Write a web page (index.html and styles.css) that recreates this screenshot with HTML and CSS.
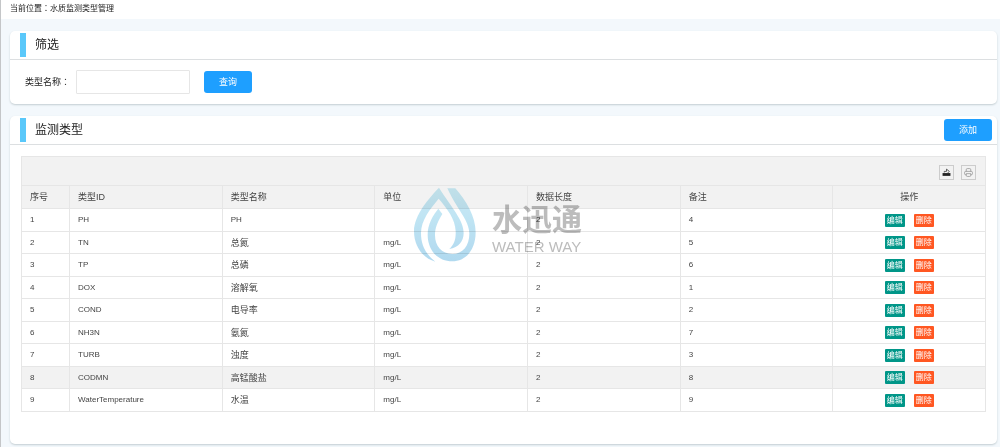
FILE: index.html
```html
<!DOCTYPE html>
<html lang="zh-CN">
<head>
<meta charset="utf-8">
<title>水质监测类型管理</title>
<link rel="stylesheet" href="styles.css">
</head>
<body>
<nav class="crumb">当前位置<span class="colon" lang="zh-TW">：</span>水质监测类型管理</nav>
<main class="page">
  <section class="card">
    <header class="card-head"><h2 class="card-title">筛选</h2></header>
    <form class="filter">
      <label for="typeName">类型名称<span class="colon" lang="zh-TW">：</span></label>
      <input class="field" id="typeName" type="text">
      <button class="btn" type="button">查询</button>
    </form>
  </section>
  <section class="card card-list">
    <header class="card-head"><h2 class="card-title">监测类型</h2><button class="btn" type="button">添加</button></header>
    <div class="list">
      <div class="toolbar">
        <button class="tool" type="button" aria-label="导出"><svg viewBox="0 0 16 16"><path d="M1 9h14v5H1z" fill="#222"/><path d="M4 8V6h4V2l5 4-3 3" fill="none" stroke="#444" stroke-width="1.5"/></svg></button>
        <button class="tool" type="button" aria-label="打印"><svg viewBox="0 0 16 16" fill="none" stroke="#888" stroke-width="1.2"><path d="M4 6V3q0-2 2-2h4q2 0 2 2v3M4 12H3q-2 0-2-2V8q0-2 2-2h10q2 0 2 2v2q0 2-2 2h-1M4 10h8v3q0 2-2 2H6q-2 0-2-2z"/></svg></button>
      </div>
      <table class="grid">
        <colgroup><col class="col-no"><col><col><col><col><col><col></colgroup>
        <thead><tr><th>序号</th><th>类型ID</th><th>类型名称</th><th>单位</th><th>数据长度</th><th>备注</th><th class="ops">操作</th></tr></thead>
        <tbody>
          <tr><td>1</td><td>PH</td><td>PH</td><td></td><td>2</td><td>4</td><td class="ops"><button class="mini edit">编辑</button><button class="mini del">删除</button></td></tr>
          <tr><td>2</td><td>TN</td><td class="zh">总氮</td><td>mg/L</td><td>2</td><td>5</td><td class="ops"><button class="mini edit">编辑</button><button class="mini del">删除</button></td></tr>
          <tr><td>3</td><td>TP</td><td class="zh">总磷</td><td>mg/L</td><td>2</td><td>6</td><td class="ops"><button class="mini edit">编辑</button><button class="mini del">删除</button></td></tr>
          <tr><td>4</td><td>DOX</td><td class="zh">溶解氧</td><td>mg/L</td><td>2</td><td>1</td><td class="ops"><button class="mini edit">编辑</button><button class="mini del">删除</button></td></tr>
          <tr><td>5</td><td>COND</td><td class="zh">电导率</td><td>mg/L</td><td>2</td><td>2</td><td class="ops"><button class="mini edit">编辑</button><button class="mini del">删除</button></td></tr>
          <tr><td>6</td><td>NH3N</td><td class="zh">氨氮</td><td>mg/L</td><td>2</td><td>7</td><td class="ops"><button class="mini edit">编辑</button><button class="mini del">删除</button></td></tr>
          <tr><td>7</td><td>TURB</td><td class="zh">浊度</td><td>mg/L</td><td>2</td><td>3</td><td class="ops"><button class="mini edit">编辑</button><button class="mini del">删除</button></td></tr>
          <tr class="active"><td>8</td><td>CODMN</td><td class="zh">高锰酸盐</td><td>mg/L</td><td>2</td><td>8</td><td class="ops"><button class="mini edit">编辑</button><button class="mini del">删除</button></td></tr>
          <tr><td>9</td><td>WaterTemperature</td><td class="zh">水温</td><td>mg/L</td><td>2</td><td>9</td><td class="ops"><button class="mini edit">编辑</button><button class="mini del">删除</button></td></tr>
        </tbody>
      </table>
    </div>
  </section>
</main>
<div class="watermark">
  <svg class="drop" viewBox="10 12 190 225">
    <defs><linearGradient id="g" x1="0" y1="0" x2="0" y2="1"><stop offset="0" stop-color="#c4eaf5"/><stop offset="1" stop-color="#a8d5ee"/></linearGradient></defs>
    <g fill="url(#g)">
      <path d="M87 14C60 42 12 95 12 145C12 190 38 225 76 236C46 212 33 185 33 150C33 112 60 78 86 47C112 78 136 108 137 145C138 170 132 185 118 198C146 194 161 175 161 150C161 110 125 75 87 14Z"/>
      <path d="M112 16H136C168 52 197 100 197 148C197 200 168 235 127 235C82 235 53 200 53 155C53 123 68 98 85 77L97 93C82 118 75 135 75 157C75 190 96 213 127 213C158 213 178 188 178 152C178 112 140 78 112 16Z"/>
    </g>
  </svg>
  <div class="brand"><span class="brand-zh">水迅通</span><span class="brand-en">WATER WAY</span></div>
</div>
</body>
</html>
```
FILE: styles.css
```css
* { box-sizing: border-box; }
body {
  margin: 0;
  min-height: 100vh;
  border-left: 1px solid #c4c6c8;
  background: #f3f8fc;
  color: #222;
  font: 9px/12px "Liberation Sans", "Noto Sans CJK SC", sans-serif;
}
button, input { font: inherit; }
.colon { font-family: "Noto Sans CJK TC", sans-serif; line-height: 1; }
.crumb { height: 19px; padding: 3px 9px; background: #fff; font-size: 8px; }
.page { display: flex; flex-direction: column; gap: 12px; padding: 12px 3px 3px 9px; }
.card { background: #fff; border-radius: 5px; box-shadow: 0 1px 2px #c3cdd2; }
.card-list { padding-bottom: 32px; }
.card-head {
  display: flex;
  align-items: center;
  justify-content: space-between;
  height: 29px;
  padding: 0 5px 0 10px;
  border-bottom: 1px solid #dcdfe1;
}
.card-title {
  margin: 0;
  padding-left: 9px;
  border-left: 6px solid #5ac8fa;
  font-size: 12px;
  font-weight: 400;
  line-height: 24px;
}
.btn {
  width: 48px;
  height: 22px;
  padding: 0;
  border: 0;
  border-radius: 3px;
  background: #1e9fff;
  color: #fff;
}
.filter { display: flex; align-items: center; height: 44px; padding: 0 15px; }
.field { width: 114px; height: 24px; margin: 0 14px 0 6px; padding: 0 4px; border: 1px solid #e6e6e6; border-radius: 1px; background: #fff; }
.list { margin: 11px 11px 0 11px; border: 1px solid #e6e6e6; border-width: 1px 0 0 1px; color: #444; }
.toolbar {
  display: flex;
  align-items: center;
  justify-content: flex-end;
  gap: 7px;
  height: 28px;
  padding: 3px 9px 0;
  border-right: 1px solid #e6e6e6;
  background: #f2f2f2;
}
.tool { display: grid; place-items: center; width: 15px; height: 15px; padding: 0; border: 1px solid #ccc; background: transparent; }
.tool svg { width: 9px; height: 9px; }
.grid {
  width: 100%;
  table-layout: fixed;
  border-collapse: separate;
  border-spacing: 0;
  border-top: 1px solid #e6e6e6;
}
.col-no { width: 48px; }
.grid th, .grid td { padding: 0 8px; border: 1px solid #e6e6e6; border-width: 0 1px 1px 0; text-align: left; font-weight: 400; }
.grid th { height: 23px; }
.grid td { height: 22px; font-size: 8px; }
.grid tr:nth-child(odd) td { height: 23px; }
.grid .zh { font-size: 9px; }
.grid th, .grid .active td { background: #f2f2f2; }
.grid .ops { text-align: center; }
.mini { width: 20px; height: 13px; padding: 0; border: 0; border-radius: 1px; color: #fff; line-height: 13px; vertical-align: middle; }
.mini + .mini { margin-left: 9px; }
.edit { background: #009688; }
.del { background: #ff5722; }
.watermark { position: absolute; top: 187px; left: 413px; display: flex; gap: 15px; pointer-events: none; opacity: .9; mix-blend-mode: multiply; }
.drop { width: 64px; height: 75px; }
.brand { display: flex; flex-direction: column; padding-top: 15px; color: #b5b5b5; }
.brand-zh { font-size: 30px; font-weight: 700; line-height: 36px; }
.brand-en { font-size: 15px; line-height: 18px; }
```
